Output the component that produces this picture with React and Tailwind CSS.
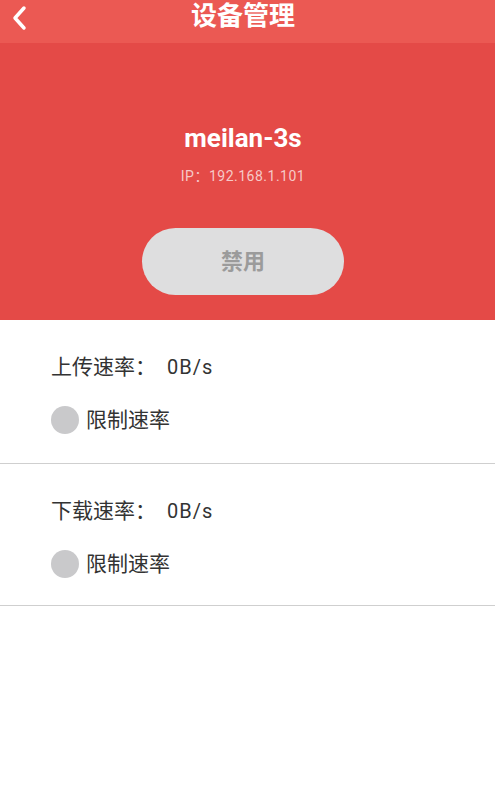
import React from "react";

const font = { fontFamily: 'Roboto, "Noto Sans CJK SC", sans-serif' };

const RateBlock = ({ label, last }) => (
  <div
    className={
      "border-b border-[#cfcfcf] pl-[51px] pt-[33px] " +
      (last ? "pb-[27px]" : "pb-[29px]")
    }
  >
    <div className="flex h-[28px] items-baseline text-[21px] leading-[28px] text-[#333]">
      <span>{label}：</span>
      <span className="ml-[11px] text-[20px] tracking-[1px]">0B/s</span>
    </div>
    <div className="mt-[25px] flex items-center gap-[7px]">
      <span className="block h-[28px] w-[28px] rounded-full bg-[#c9c9cb]" />
      <span className="text-[21px] leading-[28px] text-[#333]">限制速率</span>
    </div>
  </div>
);

export default function App() {
  return (
    <div className="h-[800px] w-[495px] overflow-hidden bg-white" style={font}>
      {/* top bar */}
      <div className="relative flex h-[43px] items-center justify-center bg-[#eb5953]">
        <svg
          className="absolute left-[10px] top-[4px]"
          width="20"
          height="28"
          viewBox="0 0 20 28"
          fill="none"
          stroke="#fff"
          strokeWidth="3.5"
          strokeLinecap="round"
          strokeLinejoin="round"
        >
          <path d="M14 4 L5 14 L14 24" />
        </svg>
        <h1 className="mt-[-10px] mr-[9px] text-[26px] font-bold text-white">设备管理</h1>
      </div>

      {/* device header */}
      <div className="flex h-[277px] flex-col items-center bg-[#e44a47]">
        <div className="mt-[78px] mr-[9px] text-[26px] font-bold leading-[34px] text-white">
          meilan-3s
        </div>
        <div className="mt-[12px] mr-[9px] text-[14px] tracking-[0.5px] leading-[18px] text-[#f6c9c7]">
          IP：192.168.1.101
        </div>
        <button className="mt-[43px] mr-[9px] h-[67px] w-[202px] rounded-full bg-[#dededf] text-[22px] font-bold text-[#9b9b9b]">
          禁用
        </button>
      </div>

      <RateBlock label="上传速率" />
      <RateBlock label="下载速率" last />
    </div>
  );
}
